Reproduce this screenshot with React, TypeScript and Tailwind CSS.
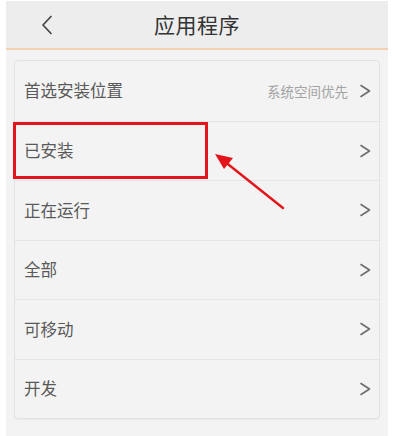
import React from 'react';

const rows: { label: string; value?: string }[] = [
  { label: '首选安装位置', value: '系统空间优先' },
  { label: '已安装' },
  { label: '正在运行' },
  { label: '全部' },
  { label: '可移动' },
  { label: '开发' },
];

function Chevron() {
  return (
    <svg width="12" height="16" viewBox="0 0 12 16" fill="none" className="shrink-0">
      <path d="M2 2.5l8.5 5.5L2 13.5" stroke="#6b6b6b" strokeWidth="1.5" strokeLinecap="round" strokeLinejoin="round" />
    </svg>
  );
}

export default function App() {
  return (
    <div
      className="relative w-[393px] h-[436px] bg-white pl-[6px] pr-[5px] pt-[1px] overflow-hidden"
      style={{ fontFamily: '"Noto Sans CJK SC", "Noto Sans", sans-serif' }}
    >
      <div className="h-full flex flex-col bg-[#f3f3f3]">
        {/* Header */}
        <div className="relative h-[49px] shrink-0 bg-[#ededed] border-b-2 border-[#f5d0b0] flex items-center justify-center">
          <svg
            width="12"
            height="20"
            viewBox="0 0 12 20"
            fill="none"
            className="absolute left-[35px] top-[14px]"
          >
            <path d="M10 1.5L2 10l8 8.5" stroke="#444" strokeWidth="1.7" strokeLinecap="round" strokeLinejoin="round" />
          </svg>
          <h1 className="text-[21px] text-[#333] leading-none tracking-[0.5px]">应用程序</h1>
        </div>

        {/* List card */}
        <div className="mx-[8px] mt-[10px] rounded-[4px] border border-[#e3e3e3] bg-[#f3f3f3] shadow-[0_1px_1px_rgba(0,0,0,0.04)]">
          {rows.map((r, i) => (
            <div
              key={r.label}
              className={`h-[59.5px] flex items-center pl-[9px] pr-[8px] ${i > 0 ? 'border-t border-[#e4e4e4]' : ''}`}
            >
              <span className="flex-1 text-[16.5px] text-[#595959]">{r.label}</span>
              {r.value && <span className="text-[13.5px] text-[#a3a3a3] mr-[11px]">{r.value}</span>}
              <Chevron />
            </div>
          ))}
        </div>
      </div>

      {/* Annotation */}
      <div className="absolute left-[13px] top-[122px] w-[195px] h-[57px] border-[3px] border-[#e3151c]" />
      <svg className="absolute left-0 top-0" width="393" height="436" viewBox="0 0 393 436" fill="none">
        <line x1="283" y1="208" x2="224" y2="161" stroke="#e3151c" strokeWidth="2.4" strokeLinecap="round" />
        <polygon points="215,154 233,158 224,169" fill="#e3151c" />
      </svg>
    </div>
  );
}
